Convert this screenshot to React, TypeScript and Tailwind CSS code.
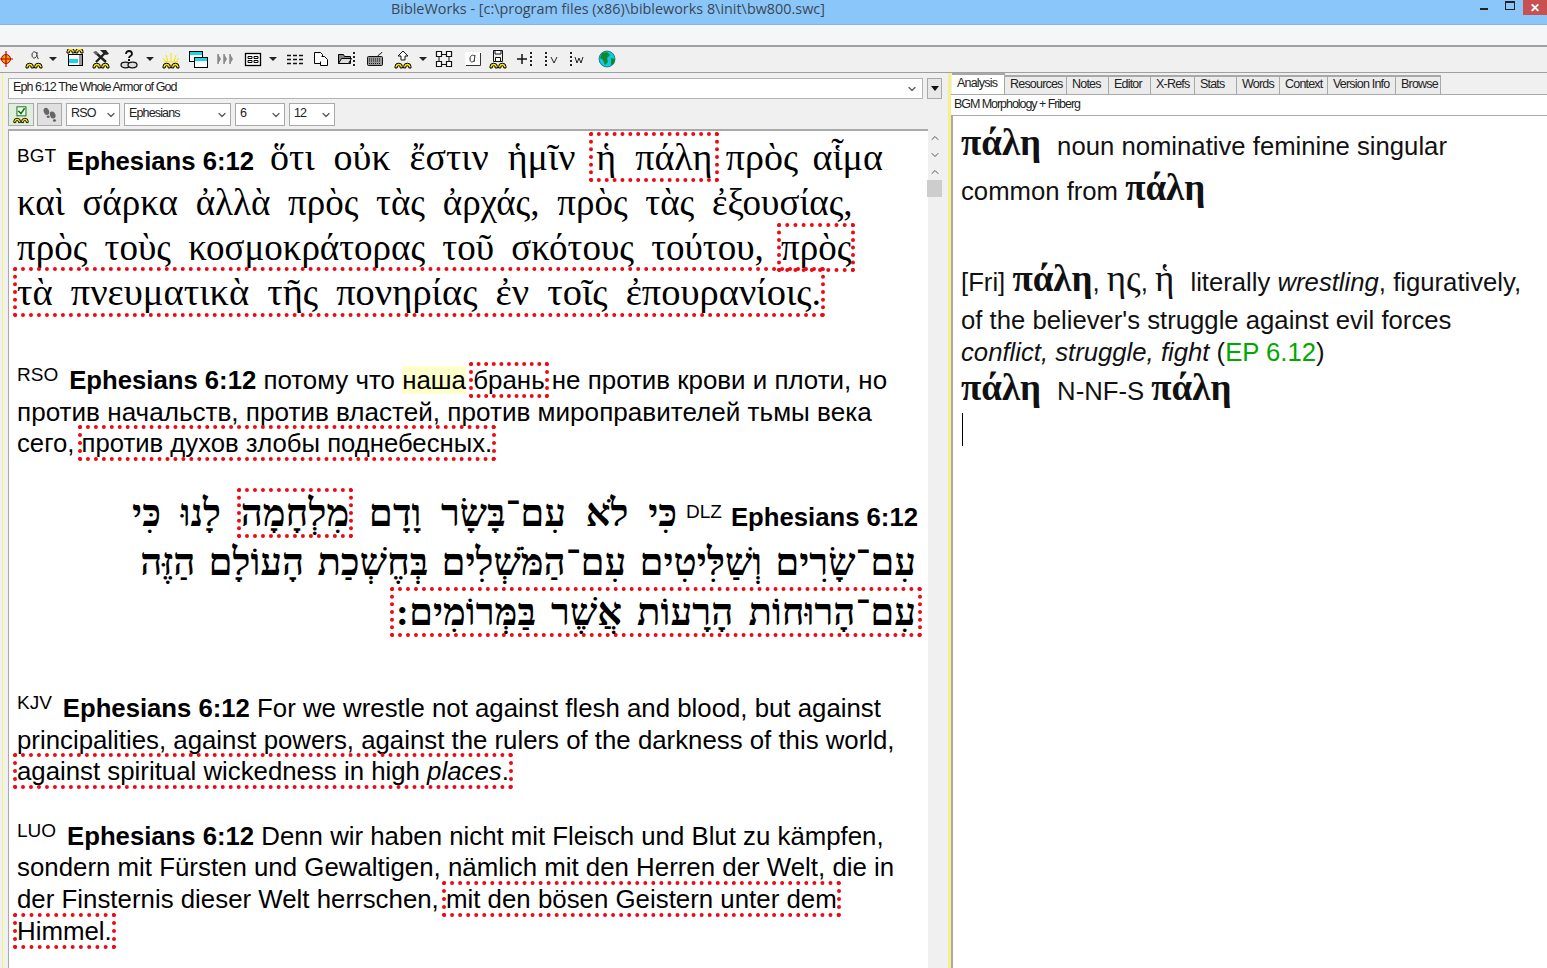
import React from "react";
import { ChevronDown, ChevronUp } from "lucide-react";

const S = ({ c, children, w = 20 }: { c?: string; children: React.ReactNode; w?: number }) => (
  <svg width={w} height={20} viewBox={`0 0 ${w} 20`} className={`shrink-0 ${c ?? ""}`}>{children}</svg>
);
const Books = ({ y = 15 }: { y?: number }) => (
  <g fill="#ffe600" stroke="#000" strokeWidth="1">
    <path d={`M2 ${y + 4}v-1.5a3.6 3.2 0 0 1 7.4 0v1.5h-2.2v-1a1.5 1.2 0 0 0-3 0v1z`} />
    <path d={`M10.6 ${y + 4}v-1.5a3.6 3.2 0 0 1 7.4 0v1.5h-2.2v-1a1.5 1.2 0 0 0-3 0v1z`} />
  </g>
);
const Arrow = ({ c }: { c: string }) => (
  <S w={8} c={c}><path d="M0 8h8l-4 4z" fill="#222" /></S>
);
const Dots = ({ x }: { x: number }) => (
  <path d={`M${x} 3v14`} stroke="#222" strokeWidth="2" strokeDasharray="2 2" />
);

const Toolbar = () => (
  <div className="flex h-[25px] items-center bg-[#f0f0f0] pb-px">
    <S w={14} c="ml-[-1px]">
      <circle cx="7" cy="10" r="4.5" fill="#e8a800" stroke="#b00000" />
      <path d="M7 2v16M0 10h14" stroke="#c00000" strokeWidth="1.2" />
    </S>
    <S c="ml-[11px]">
      <path d="M13 5c-1-3-5-3-5 1s4 4 5 0M13 3c-.5 4 .5 6 1.500 7" fill="none" stroke="#333" />
      <path d="M10 12h0" stroke="#333" />
      <Books />
    </S>
    <Arrow c="ml-[5px]" />
    <S c="ml-[8px]">
      <rect x="3.500" y="5.500" width="14" height="11" fill="#fff" stroke="#000" />
      <rect x="4" y="10" width="9" height="4" fill="#19d5e8" />
      <rect x="14" y="6" width="3" height="10" fill="#999" />
      <Books y={0} />
    </S>
    <S c="ml-[6px]">
      <path d="M4 3l11 10M15 3L5 13" stroke="#222" strokeWidth="2.400" />
      <path d="M9 1h6l3 4-3 1-3-2z" fill="#222" />
      <path d="M2 3l3-1 2 3-2 1z" fill="#666" />
      <Books />
    </S>
    <S c="ml-[8px]">
      <path d="M7 5c0-4 6-4 6 0 0 2-3 2-3 4" fill="none" stroke="#111" strokeWidth="1.800" />
      <rect x="9" y="10" width="2" height="2" fill="#111" />
      <ellipse cx="6.500" cy="16" rx="4.500" ry="2.800" fill="#ddd" stroke="#111" strokeWidth="1.300" />
      <ellipse cx="13.500" cy="16" rx="4.500" ry="2.800" fill="#ddd" stroke="#111" strokeWidth="1.300" />
    </S>
    <Arrow c="ml-[7px]" />
    <S c="ml-[7px]">
      <path d="M10 13V4M7 13L5 6M13 13l2-7M5 13L2 9M15 13l3-4M3 13h14" stroke="#f4e400" strokeWidth="1" />
      <Books />
    </S>
    <S c="ml-[7px]">
      <rect x="1.500" y="2.500" width="13" height="10" fill="#fff" stroke="#000" />
      <rect x="2" y="3" width="12" height="3" fill="#19d5e8" />
      <rect x="6.500" y="8.500" width="13" height="10" fill="#fff" stroke="#000" />
      <rect x="7" y="9" width="12" height="3" fill="#19d5e8" />
    </S>
    <S c="ml-[7px]">
      <path d="M3 5v10l3-5zM9 5v10l3-5zM15 5v10l3-5z" fill="#8a8a8a" />
      <path d="M3 5v10M9 5v10M15 5v10" stroke="#8a8a8a" strokeWidth="1.500" />
    </S>
    <S c="ml-[8px]">
      <rect x="2.500" y="4.500" width="15" height="12" fill="#fff" stroke="#000" strokeWidth="1.300" />
      <path d="M5 7.500h4v2H5zM11 7.500h4v2h-4zM5 11.500h4v2H5zM11 11.500h4v2h-4z" fill="none" stroke="#000" />
    </S>
    <Arrow c="ml-[6px]" />
    <S c="ml-[8px]">
      <path d="M2 6.500h4M2 10.500h4M2 14.500h4M8 6.500h4M8 10.500h4M8 14.500h4M14 6.500h4M14 10.500h4M14 14.500h4" stroke="#111" strokeWidth="1.400" />
    </S>
    <S c="ml-[6px]">
      <path d="M3.500 3.500h6l2 2v9h-8z" fill="#fff" stroke="#000" />
      <path d="M10.500 7.500h3l3 3v6h-7v-4" fill="#fff" stroke="#000" />
    </S>
    <S c="ml-[6px]">
      <path d="M1.500 5.500h5l1 2h6v7h-12z" fill="#888" stroke="#000" />
      <path d="M1.500 14.500l3-5h10l-3 5z" fill="#ddd" stroke="#000" />
      <Dots x={17} />
    </S>
    <S c="ml-[8px]">
      <path d="M13 7c0-2 4-2 4-4" fill="none" stroke="#222" />
      <rect x="2.500" y="7.500" width="15" height="9" rx="1" fill="#999" stroke="#111" />
      <path d="M4 10h12M4 12h12M4 14.500h12" stroke="#111" strokeDasharray="1 1" />
    </S>
    <S c="ml-[8px]">
      <path d="M10 2l5 5h-3v4H8V7H5z" fill="#fff" stroke="#111" />
      <Books />
    </S>
    <Arrow c="ml-[6px]" />
    <S c="ml-[7px]">
      <path d="M7 5.500h6M7 15.500h6M5 8v5M15 8v5" stroke="#111" />
      <path d="M2.500 2.500h5v5h-5zM12.500 2.500h5v5h-5zM2.500 12.500h5v5h-5zM12.500 12.500h5v5h-5z" fill="#fff" stroke="#111" strokeWidth="1.200" />
    </S>
    <S c="ml-[9px]">
      <path d="M2 3h16v14H2" fill="#fff" />
      <path d="M17.500 4v12.500H3" fill="none" stroke="#333" />
      <path d="M12 7c-2-1.500-5-1-5 3s3 3.500 5 1M12 6l-1 7" fill="none" stroke="#333" />
    </S>
    <S c="ml-[5px]">
      <path d="M5.500 1.500h9v11h-9z" fill="#eee" stroke="#111" />
      <path d="M7 1.500h6v3.500H7zM7.500 8.500h5V12.500h-5z" fill="#fff" stroke="#111" />
      <Books />
    </S>
    <S c="ml-[7px]">
      <path d="M2 10h10M7 5v10" stroke="#111" strokeWidth="1.500" />
      <Dots x={16} />
    </S>
    <S c="ml-[7px]">
      <Dots x={4} />
      <path d="M9 8l3 6 3-6" fill="none" stroke="#222" />
    </S>
    <S c="ml-[6px]">
      <Dots x={3} />
      <path d="M7 8l2 6 2-5 2 5 2-6" fill="none" stroke="#222" />
    </S>
    <S c="ml-[9px]">
      <circle cx="10" cy="10" r="8" fill="#13c8e0" stroke="#0b5f60" strokeWidth=".7" />
      <path d="M5 4l5-1 3 3-3 3 1 4-3 3-2-5-3-2zM14 9l4 1-1 5-3 1z" fill="#0c8a30" />
    </S>
  </div>
);

const Combo = ({ t, c }: { t: string; c: string }) => (
  <div className={`flex h-[23px] items-center justify-between border border-[#a9a9a9] bg-white pl-1 pr-0.5 text-[12.500px] tracking-[-0.85px] text-[#222] ${c}`}>
    <span className="mb-0.5">{t}</span>
    <ChevronDown size={12} strokeWidth={2.400} className="text-[#555]" />
  </div>
);

const Tab = ({ t, c, on }: { t: string; c: string; on?: boolean }) => (
  <div className={`flex items-center justify-start border-r border-t-2 border-[#a8a8a8] pl-[5px] text-[12.500px] tracking-[-0.8px] text-[#222] ${on ? "h-[21px] bg-white" : "h-[19px] bg-[#ececec]"} ${c}`}>
    <span className="mb-0.5">{t}</span>
  </div>
);

const Box = ({ children, c }: { children: React.ReactNode; c?: string }) => (
  <span className={`rounded-[2px] border-[4px] border-dotted border-[#ee0a12] ${c ?? "mx-[-4px]"}`}>{children}</span>
);
const Tag = ({ t, c }: { t: string; c: string }) => (
  <span className={`relative top-[-8px] text-[19px] font-normal [font-family:'Liberation_Sans',sans-serif] ${c}`}>{t}</span>
);
const Ref = () => <b className="text-[25.700px]">Ephesians 6:12</b>;

const Gr = ({ children, c }: { children: React.ReactNode; c?: string }) => (
  <div className={`h-[45px] whitespace-nowrap leading-[45px] [font-family:'Liberation_Serif',serif] ${c ?? ""}`}>{children}</div>
);
const L = ({ children, c }: { children: React.ReactNode; c?: string }) => (
  <div className={`h-[31.500px] whitespace-nowrap leading-[31.500px] ${c ?? "text-[25.800px]"}`}>{children}</div>
);
const He = ({ children, c }: { children: React.ReactNode; c?: string }) => (
  <div dir="rtl" className={`h-[49.500px] whitespace-nowrap text-[38.500px] font-bold leading-[49.500px] [font-family:'Liberation_Serif',serif] ${c ?? ""}`}>{children}</div>
);
const Sans = ({ children }: { children: React.ReactNode }) => (
  <span className="text-[25.700px] font-bold [word-spacing:0px] [font-family:'Liberation_Sans',sans-serif]">{children}</span>
);
const P = () => <span className="text-[37px] font-bold [font-family:'Liberation_Serif',serif]">πάλη</span>;

export default function App() {
  return (
    <div className="flex h-[968px] w-[1547px] flex-col overflow-hidden bg-white text-black [font-family:'Liberation_Sans',sans-serif]">
      <div className="flex h-[25px] shrink-0 items-center border-b border-[#7fb4e4] bg-[#8bc6fb]">
        <span className="mb-1.5 ml-[391px] text-[14.400px] text-[#3b4652] [font-family:'Open_Sans',sans-serif]">BibleWorks - [c:\program files (x86)\bibleworks 8\init\bw800.swc]</span>
        <div className="ml-auto flex h-full items-start">
          <div className="mr-[17px] mt-2 h-[2px] w-2 bg-[#222]" />
          <div className="mr-[8px] mt-[1px] h-[9px] w-[10px] border border-t-2 border-[#222]" />
          <div className="flex h-[15px] w-[24px] items-center justify-center bg-[#c75050] text-[12px] font-bold text-white">✕</div>
        </div>
      </div>
      <div className="h-[22px] shrink-0 border-b-2 border-[#a0a0a0] bg-[#f5f6f7]" />
      <Toolbar />
      <div className="flex min-h-0 flex-1 border-t border-[#a0a0a0] bg-[#f0f0f0]">
        <div className="flex w-[948px] shrink-0 flex-col pl-[2px]">
          <div className="flex min-h-0 flex-1 border-l border-[#f7f37c]">
            <div className="flex min-w-0 flex-1 flex-col pl-[5px]">
              <div className="mt-[5px] flex items-start">
                <div className="flex h-[21px] w-[915px] shrink-0 items-center justify-between border border-[#b4b4b4] bg-white pl-1 pr-1 text-[12.500px] tracking-[-0.9px] text-[#222]">
                  <span className="mb-0.5">Eph 6:12 The Whole Armor of God</span>
                  <ChevronDown size={12} strokeWidth={2.400} className="text-[#555]" />
                </div>
                <div className="ml-[4px] flex h-[21px] w-[15px] shrink-0 items-center justify-center border border-[#a9a9a9] bg-[#e8e8e8]">
                  <svg width="8" height="5" viewBox="0 0 8 5"><path d="M0 0h8L4 5z" fill="#111" /></svg>
                </div>
              </div>
              <div className="mt-[4px] flex h-[26px] shrink-0 items-start">
                <div className="flex h-[23px] w-[26px] items-center justify-center border border-[#a9a9a9] bg-[#dfeedd]">
                  <svg width="18" height="19" viewBox="0 0 20 20">
                    <rect x="5.500" y="1.500" width="10" height="10" fill="#fff" stroke="#006000" />
                    <path d="M7 6l3 3 4-6" fill="none" stroke="#008000" strokeWidth="1.800" />
                    <Books />
                  </svg>
                </div>
                <div className="ml-[3px] flex h-[23px] w-[25px] items-center justify-center border border-[#a9a9a9] bg-[#e0e0e0]">
                  <svg width="18" height="18" viewBox="0 0 20 20">
                    <ellipse cx="6" cy="6" rx="3" ry="4" transform="rotate(-20 6 6)" fill="#666" />
                    <ellipse cx="8" cy="12" rx="1.800" ry="1.400" fill="#666" />
                    <ellipse cx="13" cy="10" rx="3" ry="4" transform="rotate(-20 13 10)" fill="#666" />
                    <ellipse cx="15" cy="16" rx="1.800" ry="1.400" fill="#666" />
                  </svg>
                </div>
                <Combo t="RSO" c="ml-[4px] w-[54px]" />
                <Combo t="Ephesians" c="ml-[4px] w-[107px]" />
                <Combo t="6" c="ml-[4px] w-[50px]" />
                <Combo t="12" c="ml-[4px] w-[46px]" />
              </div>
              <div className="min-h-0 flex-1 overflow-hidden border-l border-t-2 border-[#a9a9a9] bg-white pl-[8px] pr-[12px] pt-[4px]">
                <Gr c="text-[38px]">
                  <Tag t="BGT" c="mr-[11px]" /><Sans>Ephesians 6:12</Sans>
                  <span className="ml-[16px] [word-spacing:9.500px]">ὅτι οὐκ ἔστιν ἡμῖν <Box c="ml-[-5px] mr-[-8px] px-[3px]">ἡ πάλη</Box></span>
                  <span className="[word-spacing:5px]"> πρὸς αἷμα</span>
                </Gr>
                <Gr c="text-[37px] [word-spacing:8.500px]">καὶ σάρκα ἀλλὰ πρὸς τὰς ἀρχάς, πρὸς τὰς ἐξουσίας,</Gr>
                <Gr c="text-[37px] [word-spacing:8px]">πρὸς τοὺς κοσμοκράτορας τοῦ σκότους τούτου, <Box>πρὸς</Box></Gr>
                <Gr c="text-[38.500px] [word-spacing:8.500px]"><Box>τὰ πνευματικὰ τῆς πονηρίας ἐν τοῖς ἐπουρανίοις.</Box></Gr>

                <L c="mt-[50px] text-[25.900px]">
                  <Tag t="RSO" c="mr-[11px]" /><Ref /> потому что <span className="bg-[#ffffcc]">наша</span> <Box>брань</Box> не против крови и плоти, но
                </L>
                <L c="text-[26.100px]">против начальств, против властей, против мироправителей тьмы века</L>
                <L c="text-[25.700px]">сего, <Box>против духов злобы поднебесных.</Box></L>

                <He c="mt-[29px] [word-spacing:10px]">
                  <bdi className="mr-[-2px]"><Sans>Ephesians 6:12</Sans></bdi>
                  <bdi className="mx-[9px]"><Tag t="DLZ" c="" /></bdi>
                  כִּי לֹא עִם־בָּשָׂר וָדָם <Box>מִלְחָמָה</Box> לָנוּ כִּי
                </He>
                <He c="[word-spacing:3.500px]">עִם־שָׂרִים וְשַׁלִּיטִים עִם־הַמֹּשְׁלִים בְּחֶשְׁכַת הָעוֹלָם הַזֶּה</He>
                <He c="[word-spacing:5.500px]"><Box c="mx-[-6px] px-[2px]">עִם־הָרוּחוֹת הָרָעוֹת אֲשֶׁר בַּמְּרוֹמִים:</Box></He>

                <L c="mt-[56px] text-[25.800px]">
                  <Tag t="KJV" c="mr-[11px]" /><Ref /> For we wrestle not against flesh and blood, but against
                </L>
                <L>principalities, against powers, against the rulers of the darkness of this world,</L>
                <L><Box>against spiritual wickedness in high <i>places</i>.</Box></L>

                <L c="mt-[33px] text-[25.800px]">
                  <Tag t="LUO" c="mr-[11px]" /><Ref /> Denn wir haben nicht mit Fleisch und Blut zu kämpfen,
                </L>
                <L c="text-[25.850px]">sondern mit Fürsten und Gewaltigen, nämlich mit den Herren der Welt, die in</L>
                <L c="text-[25.850px]">der Finsternis dieser Welt herrschen, <Box>mit den bösen Geistern unter dem</Box></L>
                <L c="mt-[1px] text-[25.850px]"><Box>Himmel.</Box></L>
              </div>
            </div>
            <div className="flex w-[20px] shrink-0 flex-col">
              <div className="ml-[-1px] mt-[59px] flex w-[15px] flex-1 flex-col items-center">
                <ChevronUp size={12} strokeWidth={2} className="text-[#555]" />
                <ChevronDown size={12} strokeWidth={2} className="mt-[5px] text-[#555]" />
                <ChevronUp size={12} strokeWidth={2} className="mt-[5px] text-[#555]" />
                <div className="mt-[2px] h-[17px] w-full bg-[#cdcdcd]" />
              </div>
            </div>
          </div>
        </div>
        <div className="flex w-[599px] flex-col border-l-[3px] border-[#f4f08c] bg-[#f0f0f0]">
          <div className="flex h-[21px] shrink-0 items-end pl-[1px]">
            <Tab t="Analysis" c="w-[53px]" on />
            <Tab t="Resources" c="w-[62px]" />
            <Tab t="Notes" c="w-[42px]" />
            <Tab t="Editor" c="w-[42px]" />
            <Tab t="X-Refs" c="w-[44px]" />
            <Tab t="Stats" c="w-[42px]" />
            <Tab t="Words" c="w-[43px]" />
            <Tab t="Context" c="w-[48px]" />
            <Tab t="Version Info" c="w-[68px]" />
            <Tab t="Browse" c="w-[45px]" />
          </div>
          <div className="flex h-[22px] shrink-0 items-center border-y border-[#a9a9a9] bg-white pl-[3px] text-[12.500px] tracking-[-1.05px] text-[#222]">
            <span className="mb-0.5">BGM Morphology + Friberg</span>
          </div>
          <div className="min-h-0 flex-1 border-l-2 border-[#a9a9a9] bg-white pl-[8px] pt-[5px] text-[25.700px] text-[#111]">
            <div className="h-[44px] whitespace-nowrap leading-[44px]"><P /><span className="ml-[16px]">noun nominative feminine singular</span></div>
            <div className="h-[45px] whitespace-nowrap leading-[45px]">common from <P /></div>
            <div className="mt-[46px] h-[46px] whitespace-nowrap leading-[46px]">
              [Fri] <P />, <span className="text-[37px] [font-family:'Liberation_Serif',serif]">ης</span>, <span className="text-[37px] [font-family:'Liberation_Serif',serif]">ἡ</span><span className="ml-[16px]">literally <i>wrestling</i>, figuratively,</span>
            </div>
            <div className="mt-[-1px] h-[38px] whitespace-nowrap leading-[38px]">of the believer's struggle against evil forces</div>
            <div className="mt-[-6px] h-[38px] whitespace-nowrap leading-[38px]"><i>conflict, struggle, fight</i> (<span className="text-[#00a800]">EP 6.12</span>)</div>
            <div className="mt-[-4px] h-[42px] whitespace-nowrap leading-[42px]"><P /><span className="ml-[16px]">N-NF-S</span> <P /></div>
            <div className="ml-[1px] mt-[4px] h-[33px] w-px bg-black" />
          </div>
        </div>
      </div>
    </div>
  );
}
